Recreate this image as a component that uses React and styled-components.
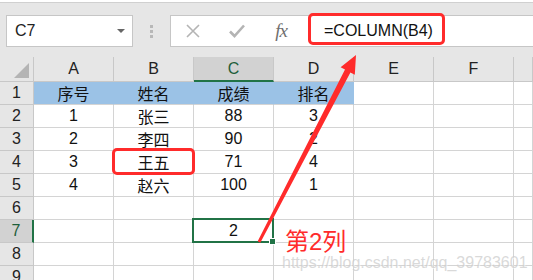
import React from 'react'
import styled, { createGlobalStyle } from 'styled-components'

const GlobalStyle = createGlobalStyle`
  body {
    margin: 0;
    width: 533px;
    height: 280px;
    overflow: hidden;
    background: #fff;
    font-family: "Liberation Sans", "Noto Sans CJK SC", sans-serif;
  }
`

const green = '#217346'
const red = '#ff2b2b'

const Page = styled.div`
  position: relative;
  width: 533px;
  height: 280px;
  overflow: hidden;
`

const Toolbar = styled.div`
  height: 57px;
  box-sizing: border-box;
  background: #e6e6e6;
  border-top: 1px solid #d0d0d0;
  margin-top: 2px;
  height: 55px;
  display: flex;
  align-items: flex-start;
  padding: 12px 0 0 6px;
  box-sizing: border-box;
`

const NameBox = styled.div`
  width: 127px;
  height: 32px;
  box-sizing: border-box;
  background: #fff;
  border: 1px solid #c6c6c6;
  display: flex;
  align-items: center;
  justify-content: space-between;
  padding: 0 7px 0 8px;
  font-size: 16px;
  color: #222;
`

const Caret = styled.span`
  width: 0;
  height: 0;
  border-left: 4px solid transparent;
  border-right: 4px solid transparent;
  border-top: 4px solid #666;
`

const Grip = styled.div`
  width: 37px;
  height: 32px;
  display: flex;
  flex-direction: column;
  align-items: center;
  justify-content: center;
  gap: 2px;
  span {
    width: 3px;
    height: 3px;
    background: #b8b8b8;
  }
`

const FormulaBox = styled.div`
  flex: 1;
  height: 32px;
  box-sizing: border-box;
  background: #fff;
  border: 1px solid #c6c6c6;
  border-right: none;
  display: flex;
  align-items: center;
`

const IconSlot = styled.div`
  width: 44px;
  height: 30px;
  display: flex;
  align-items: center;
  justify-content: center;
  flex: none;
`

const Fx = styled.span`
  font-family: "Liberation Serif", serif;
  font-style: italic;
  font-size: 19px;
  color: #6f6f6f;
  letter-spacing: -1px;
`

const Formula = styled.span`
  margin-left: 21px;
  font-size: 16px;
  color: #111;
`

const Sheet = styled.div`
  display: grid;
  grid-template-columns: 34px repeat(6, 80px) 1fr;
  grid-template-rows: 25px repeat(9, 23px);
  background: #fff;
`

const Corner = styled.div`
  position: relative;
  background: #e6e6e6;
  border-right: 1px solid #c8c8c8;
  border-bottom: 1px solid #c8c8c8;
  &::after {
    content: '';
    position: absolute;
    right: 4px;
    bottom: 3px;
    width: 0;
    height: 0;
    border-left: 15px solid transparent;
    border-bottom: 15px solid #b4b4b4;
  }
`

const ColHead = styled.div`
  box-sizing: border-box;
  background: ${p => (p.$active ? '#d2d2d2' : '#e6e6e6')};
  border-right: 1px solid #c8c8c8;
  border-bottom: ${p => (p.$active ? `2px solid ${green}` : '1px solid #c8c8c8')};
  color: ${p => (p.$active ? '#1e5e3a' : '#222')};
  font-size: 16px;
  display: flex;
  align-items: center;
  justify-content: center;
  padding-top: ${p => (p.$active ? '1px' : '0')};
`

const RowHead = styled.div`
  box-sizing: border-box;
  background: ${p => (p.$active ? '#d2d2d2' : '#e6e6e6')};
  border-right: ${p => (p.$active ? `2px solid ${green}` : '1px solid #c8c8c8')};
  border-bottom: 1px solid #c8c8c8;
  color: ${p => (p.$active ? '#1e5e3a' : '#222')};
  font-size: 16px;
  display: flex;
  align-items: center;
  justify-content: center;
`

const Cell = styled.div`
  position: relative;
  box-sizing: border-box;
  background: ${p => (p.$head ? '#9bc2e6' : '#fff')};
  border-right: 1px solid ${p => (p.$head ? '#9bc2e6' : '#d4d4d4')};
  border-bottom: 1px solid #d4d4d4;
  font-size: 16px;
  color: #111;
  display: flex;
  align-items: center;
  justify-content: center;
  ${p =>
    p.$selected &&
    `
    &::after {
      content: '';
      position: absolute;
      left: -2px;
      top: -2px;
      right: -1px;
      bottom: -1px;
      border: 2px solid ${green};
    }
    &::before {
      content: '';
      position: absolute;
      right: -3px;
      bottom: -3px;
      width: 5px;
      height: 5px;
      background: ${green};
      border: 1px solid #fff;
      z-index: 2;
    }
  `}
`

const Mark = styled.div`
  position: absolute;
  border: 3px solid ${red};
  border-radius: 5px;
  box-sizing: border-box;
  pointer-events: none;
`

const Note = styled.div`
  position: absolute;
  left: 285px;
  top: 222px;
  font-size: 24px;
  color: ${red};
  font-family: "Liberation Sans", "Noto Sans CJK SC", sans-serif;
  text-shadow: 0 0 2px #fff;
`

const Watermark = styled.div`
  position: absolute;
  left: 282px;
  top: 254px;
  font-size: 16px;
  color: rgba(205, 205, 205, 0.75);
  text-shadow: 1px 1px 0 rgba(255, 255, 255, 0.6);
`

const Arrow = styled.svg`
  position: absolute;
  left: 0;
  top: 0;
  pointer-events: none;
`

const columns = ['A', 'B', 'C', 'D', 'E', 'F', '']
const rows = [
  ['序号', '姓名', '成绩', '排名'],
  ['1', '张三', '88', '3'],
  ['2', '李四', '90', '2'],
  ['3', '王五', '71', '4'],
  ['4', '赵六', '100', '1'],
  [],
  ['', '', '2'],
  [],
  [],
]

export default function App() {
  return (
    <Page>
      <GlobalStyle />
      <Toolbar>
        <NameBox>
          C7
          <Caret />
        </NameBox>
        <Grip>
          <span />
          <span />
          <span />
        </Grip>
        <FormulaBox>
          <IconSlot>
            <svg width="14" height="14" viewBox="0 0 14 14">
              <path d="M1 1L13 13M13 1L1 13" stroke="#b4b4b4" strokeWidth="1.6" />
            </svg>
          </IconSlot>
          <IconSlot>
            <svg width="16" height="14" viewBox="0 0 16 14">
              <path d="M1 7.5L5.5 12L15 1.5" stroke="#b4b4b4" strokeWidth="2.6" fill="none" />
            </svg>
          </IconSlot>
          <IconSlot>
            <Fx>fx</Fx>
          </IconSlot>
          <Formula>=COLUMN(B4)</Formula>
        </FormulaBox>
      </Toolbar>

      <Sheet>
        <Corner />
        {columns.map((c, i) => (
          <ColHead key={i} $active={c === 'C'}>{c}</ColHead>
        ))}
        {rows.map((r, ri) => (
          <React.Fragment key={ri}>
            <RowHead $active={ri === 6}>{ri + 1}</RowHead>
            {columns.map((c, ci) => (
              <Cell key={ci} $head={ri === 0 && ci < 4} $selected={ri === 6 && ci === 2}>
                {r[ci] || ''}
              </Cell>
            ))}
          </React.Fragment>
        ))}
      </Sheet>

      <Mark style={{ left: 308, top: 13, width: 137, height: 32 }} />
      <Mark style={{ left: 112, top: 148, width: 83, height: 27 }} />

      <Arrow width="533" height="280">
        <polygon
          points="356,55 354.8,74.7 350.4,72.4 260.3,242.7 257.7,241.3 345,69.6 340.6,67.3"
          fill={red}
        />
      </Arrow>

      <Note>第2列</Note>
      <Watermark>https://blog.csdn.net/qq_39783601</Watermark>
    </Page>
  )
}
